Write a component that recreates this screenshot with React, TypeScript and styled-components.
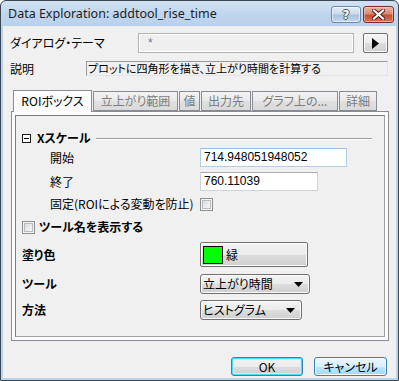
import React from "react";
import styled, { createGlobalStyle, css } from "styled-components";

const Global = createGlobalStyle`
  html, body { margin: 0; padding: 0; background: #ffffff; }
  body {
    font-family: "Noto Sans CJK JP", "Noto Sans", sans-serif;
    font-size: 12px;
    color: #000;
    font-feature-settings: "palt";
  }
  * { box-sizing: border-box; }
`;

const Window = styled.div`
  width: 399px;
  height: 381px;
  border: 1px solid #3a4652;
  border-radius: 6px 6px 0 0;
  background: linear-gradient(180deg, #d2e2f3 0px, #bfd5ed 14px, #bad1eb 26px, #bcd3ec 100%);
  display: flex;
  flex-direction: column;
  overflow: hidden;
`;

const TitleBar = styled.div`
  height: 25px;
  flex: none;
  display: flex;
  align-items: center;
  padding: 0 4px 0 7px;
`;

const TitleText = styled.div`
  flex: 1;
  font-family: "Noto Sans", "Open Sans", sans-serif;
  font-size: 12.5px;
  color: #1e1e1e;
  line-height: 16px;
  margin-top: 1px;
`;

const CaptionButton = styled.div<{ $kind: "help" | "close" }>`
  height: 17px;
  margin-top: 2px;
  border-radius: 3px;
  display: flex;
  align-items: center;
  justify-content: center;
  ${(p) =>
    p.$kind === "help"
      ? css`
          width: 30px;
          margin-right: 2px;
          border: 1px solid #6f8aa8;
          background: linear-gradient(180deg, #e3ecf6 0%, #c9daed 45%, #a9c1de 55%, #c4d8ee 100%);
          box-shadow: inset 0 0 0 1px rgba(255, 255, 255, 0.55);
        `
      : css`
          width: 31px;
          border: 1px solid #7a2f25;
          background: linear-gradient(180deg, #eab3a5 0%, #dc8872 45%, #c54f33 55%, #d6765a 100%);
          box-shadow: inset 0 0 0 1px rgba(255, 220, 210, 0.5);
        `}
`;

const HelpGlyph = styled.span`
  font-family: "DejaVu Sans", sans-serif;
  font-weight: bold;
  font-size: 12px;
  line-height: 12px;
  color: #ffffff;
  text-shadow: 1px 0 0 #46566a, -1px 0 0 #46566a, 0 1px 0 #46566a, 0 -1px 0 #46566a;
`;

const Body = styled.div`
  flex: 1;
  margin: 0 2px 2px 2px;
  background: #f0f0f0;
  display: flex;
  flex-direction: column;
  padding: 7px 8px 0 7px;
`;

const TopRow = styled.div<{ $h: number; $mt: number }>`
  display: flex;
  align-items: center;
  height: ${(p) => p.$h}px;
  margin-top: ${(p) => p.$mt}px;
`;

const TopLabel = styled.div<{ $w: number }>`
  width: ${(p) => p.$w}px;
  flex: none;
  line-height: 14px;
`;

const ThemeInput = styled.div`
  width: 216px;
  height: 20px;
  border: 1px solid #b2b2b2;
  box-shadow: inset 0 0 0 1px #ffffff;
  background: #efefef;
  color: #777777;
  font-family: "Liberation Sans", sans-serif;
  font-size: 12px;
  padding: 2px 0 0 9px;
  line-height: 14px;
`;

const ArrowButton = styled.div`
  width: 25px;
  height: 20px;
  margin-left: 9px;
  border: 1px solid #707070;
  border-radius: 2px;
  background: linear-gradient(180deg, #f3f3f3 0%, #ebebeb 50%, #dddddd 51%, #cfcfcf 100%);
  box-shadow: inset 0 0 0 1px #fcfcfc;
  display: flex;
  align-items: center;
  justify-content: center;
`;

const DescBox = styled.div`
  width: 302px;
  height: 15px;
  border-top: 1px solid #9a9a9a;
  border-left: 1px solid #9a9a9a;
  border-bottom: 1px solid #e4e4e4;
  border-right: 1px solid #e4e4e4;
  padding-left: 1px;
  font-size: 11px;
  line-height: 13px;
  white-space: nowrap;
  overflow: hidden;
`;

const TabControl = styled.div`
  margin-top: 14px;
  margin-left: 1px;
  width: 378px;
  display: flex;
  flex-direction: column;
`;

const TabStrip = styled.div`
  display: flex;
  align-items: flex-end;
  height: 22px;
  padding-left: 2px;
  margin-bottom: -1px;
  position: relative;
  z-index: 1;
`;

const Tab = styled.div<{ $active?: boolean; $w: number }>`
  width: ${(p) => p.$w}px;
  margin-right: 1px;
  display: flex;
  align-items: center;
  justify-content: center;
  border: 1px solid #898c95;
  white-space: nowrap;
  line-height: 14px;
  ${(p) =>
    p.$active
      ? css`
          height: 22px;
          border-bottom: none;
          background: #fcfcfc;
          color: #000;
          padding-bottom: 1px;
        `
      : css`
          height: 20px;
          margin-bottom: 1px;
          background: linear-gradient(180deg, #f2f2f2 0%, #e9e9e9 50%, #e0e0e0 51%, #dadada 100%);
          color: #7c7c7c;
          border-bottom-color: #898c95;
        `}
`;

const TabPanel = styled.div`
  height: 230px;
  border: 1px solid #898c95;
  background: #fcfcfc;
  padding: 3px;
`;

const Inner = styled.div`
  height: 100%;
  border: 1px solid #7d7d7d;
  border-right-color: #a0a0a0;
  border-bottom-color: #a0a0a0;
  background: #f0f0f0;
  display: flex;
  flex-direction: column;
`;

const Row = styled.div<{ $h: number; $mt: number }>`
  display: flex;
  align-items: center;
  height: ${(p) => p.$h}px;
  margin-top: ${(p) => p.$mt}px;
`;

const Label = styled.div<{ $indent?: boolean; $bold?: boolean }>`
  width: 184px;
  flex: none;
  padding-left: ${(p) => (p.$indent ? 34 : 6)}px;
  font-weight: ${(p) => (p.$bold ? 700 : 400)};
  line-height: 14px;
  white-space: nowrap;
  display: flex;
  align-items: center;
`;

const GroupHeader = styled.div`
  flex: 1;
  display: flex;
  align-items: center;
  padding-left: 6px;
  padding-right: 12px;
  font-weight: 700;
  line-height: 14px;
`;

const GroupLine = styled.div`
  flex: 1;
  margin-left: 5px;
  margin-top: 1px;
  border-top: 1px solid #a0a0a0;
  border-bottom: 1px solid #ffffff;
`;

const TextInput = styled.div<{ $w: number; $focus?: boolean }>`
  width: ${(p) => p.$w}px;
  height: 100%;
  background: #ffffff;
  border: 1px solid ${(p) => (p.$focus ? "#b3cde6" : "#cfd2d6")};
  border-top-color: ${(p) => (p.$focus ? "#9ebfe2" : "#abadb3")};
  font-family: "Liberation Sans", sans-serif;
  font-size: 12px;
  line-height: 15px;
  padding: 1px 0 0 3px;
  color: #000;
`;

const Check = styled.div<{ $gap?: number }>`
  width: 13px;
  height: 13px;
  flex: none;
  margin-right: ${(p) => p.$gap ?? 0}px;
  border: 1px solid #8e8f8f;
  background: linear-gradient(135deg, #d4d6d9 0%, #eeeeee 60%, #fafafa 100%);
  box-shadow: inset 0 0 0 1px #f4f4f4, inset 0 0 0 2px #b8bcc1;
`;

const ColorButton = styled.div`
  width: 108px;
  height: 25px;
  border: 1px solid #707070;
  border-radius: 2px;
  background: linear-gradient(180deg, #f2f2f2 0%, #ebebeb 50%, #dddddd 51%, #cfcfcf 100%);
  box-shadow: inset 0 0 0 1px #fcfcfc;
  display: flex;
  align-items: center;
  padding-left: 2px;
`;

const Swatch = styled.div<{ $color: string }>`
  width: 20px;
  height: 18px;
  background: ${(p) => p.$color};
  border: 1px solid #000;
  margin-right: 3px;
`;

const Select = styled.div<{ $w: number }>`
  width: ${(p) => p.$w}px;
  height: 20px;
  border: 1px solid #707070;
  border-radius: 3px;
  background: linear-gradient(180deg, #f2f2f2 0%, #ebebeb 50%, #dddddd 51%, #cfcfcf 100%);
  box-shadow: inset 0 0 0 1px #fcfcfc;
  display: flex;
  align-items: center;
  padding: 0 6px 0 2px;
  line-height: 14px;
`;

const SelectText = styled.div`
  flex: 1;
  white-space: nowrap;
`;

const ButtonRow = styled.div`
  display: flex;
  justify-content: flex-end;
  gap: 11px;
  margin-top: 16px;
  margin-right: 1px;
`;

const DlgButton = styled.div<{ $w: number; $hot?: boolean }>`
  width: ${(p) => p.$w}px;
  height: 19px;
  border-radius: 3px;
  display: flex;
  align-items: center;
  justify-content: center;
  font-family: "Noto Sans CJK JP", "Liberation Sans", sans-serif;
  line-height: 14px;
  ${(p) =>
    p.$hot
      ? css`
          border: 1px solid #3c7fb1;
          background: linear-gradient(180deg, #eaf6fd 0%, #d9f0fc 50%, #bee6fd 51%, #a7d9f5 100%);
          box-shadow: inset 0 0 0 1px #f4fbfe;
        `
      : css`
          border: 1px solid #3c7fb1;
          background: linear-gradient(180deg, #f2f2f2 0%, #ebebeb 50%, #dddddd 51%, #cfcfcf 100%);
          box-shadow: inset 0 0 0 1px #48dcfc, inset 0 0 0 2px #c6eefc;
        `}
`;

const TriRight = () => (
  <svg width="7" height="11" viewBox="0 0 7 11">
    <path d="M0 0 L7 5.5 L0 11 Z" fill="#000" />
  </svg>
);

const TriDown = () => (
  <svg width="9" height="5" viewBox="0 0 9 5">
    <path d="M0 0 L9 0 L4.5 5 Z" fill="#000" />
  </svg>
);

const MinusBox = () => (
  <svg width="9" height="9" viewBox="0 0 9 9" style={{ flex: "none", marginRight: 6 }}>
    <rect x="0.5" y="0.5" width="8" height="8" fill="#fff" stroke="#1a1a1a" />
    <path d="M2 4.5 H7" stroke="#000" />
  </svg>
);

const CloseGlyph = () => (
  <svg width="13" height="11" viewBox="0 0 13 11">
    <path d="M2 1.5 L11 9.5 M11 1.5 L2 9.5" stroke="#4a1810" strokeWidth="4" strokeLinecap="square" />
    <path d="M2 1.5 L11 9.5 M11 1.5 L2 9.5" stroke="#ffffff" strokeWidth="2.2" strokeLinecap="square" />
  </svg>
);

export default function App() {
  return (
    <>
      <Global />
      <Window>
        <TitleBar>
          <TitleText>Data Exploration: addtool_rise_time</TitleText>
          <CaptionButton $kind="help">
            <HelpGlyph>?</HelpGlyph>
          </CaptionButton>
          <CaptionButton $kind="close">
            <CloseGlyph />
          </CaptionButton>
        </TitleBar>
        <Body>
          <TopRow $h={20} $mt={0}>
            <TopLabel $w={128}>ダイアログ・テーマ</TopLabel>
            <ThemeInput>*</ThemeInput>
            <ArrowButton>
              <TriRight />
            </ArrowButton>
          </TopRow>
          <TopRow $h={15} $mt={8}>
            <TopLabel $w={76}>説明</TopLabel>
            <DescBox>プロットに四角形を描き、立上がり時間を計算する</DescBox>
          </TopRow>
          <TabControl>
            <TabStrip>
              <Tab $active $w={79}>ROIボックス</Tab>
              <Tab $w={85}>立上がり範囲</Tab>
              <Tab $w={21}>値</Tab>
              <Tab $w={50}>出力先</Tab>
              <Tab $w={86}>グラフ上の...</Tab>
              <Tab $w={38}>詳細</Tab>
            </TabStrip>
            <TabPanel>
              <Inner>
                <Row $h={14} $mt={15}>
                  <GroupHeader>
                    <MinusBox />
                    Xスケール
                    <GroupLine />
                  </GroupHeader>
                </Row>
                <Row $h={19} $mt={3}>
                  <Label $indent>開始</Label>
                  <TextInput $w={147} $focus>714.948051948052</TextInput>
                </Row>
                <Row $h={19} $mt={5}>
                  <Label $indent>終了</Label>
                  <TextInput $w={118}>760.11039</TextInput>
                </Row>
                <Row $h={14} $mt={6}>
                  <Label $indent>固定(ROIによる変動を防止)</Label>
                  <Check />
                </Row>
                <Row $h={14} $mt={9}>
                  <Label $bold>
                    <Check $gap={4} />
                    ツール名を表示する
                  </Label>
                </Row>
                <Row $h={25} $mt={8}>
                  <Label $bold>塗り色</Label>
                  <ColorButton>
                    <Swatch $color="#00ff00" />
                    緑
                  </ColorButton>
                </Row>
                <Row $h={20} $mt={7}>
                  <Label $bold>ツール</Label>
                  <Select $w={110}>
                    <SelectText>立上がり時間</SelectText>
                    <TriDown />
                  </Select>
                </Row>
                <Row $h={20} $mt={6}>
                  <Label $bold>方法</Label>
                  <Select $w={102}>
                    <SelectText>ヒストグラム</SelectText>
                    <TriDown />
                  </Select>
                </Row>
              </Inner>
            </TabPanel>
          </TabControl>
          <ButtonRow>
            <DlgButton $w={72}>OK</DlgButton>
            <DlgButton $w={73} $hot>キャンセル</DlgButton>
          </ButtonRow>
        </Body>
      </Window>
    </>
  );
}
